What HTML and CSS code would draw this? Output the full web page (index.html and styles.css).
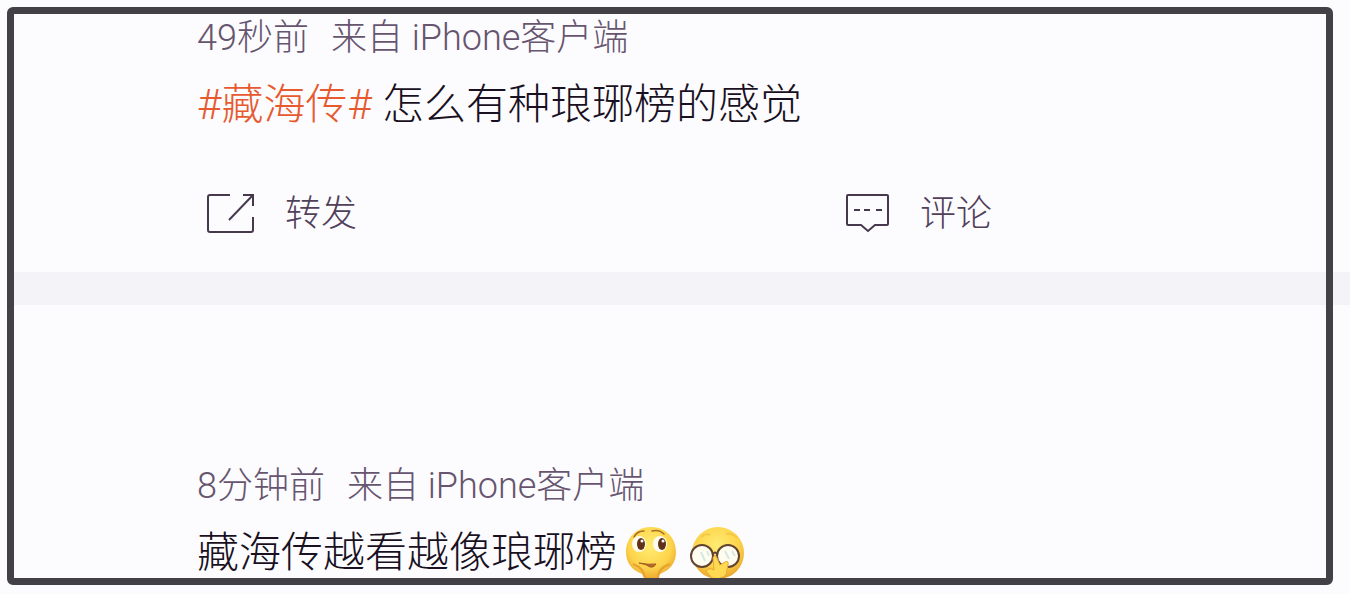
FILE: index.html
```html
<!DOCTYPE html>
<html lang="zh-CN">
<head>
<meta charset="utf-8">
<meta name="viewport" content="width=device-width, initial-scale=1">
<title>藏海传</title>
<link rel="stylesheet" href="styles.css">
</head>
<body>
<main class="feed">
  <article class="post">
    <p class="meta"><time>49秒前</time><span>来自 iPhone客户端</span></p>
    <p class="text"><a class="topic" href="#topic">#藏海传#</a> 怎么有种琅琊榜的感觉</p>
    <div class="actions">
      <button class="action" type="button">
        <svg class="icon" width="50" height="42" viewBox="0 0 50 42" aria-hidden="true"><path d="M24 2H4Q2 2 2 4V37Q2 39 4 39H45Q47 39 47 37V24M37 2H47V13M47 2L23 27"/></svg>
        <span>转发</span>
      </button>
      <button class="action" type="button">
        <svg class="icon" width="46" height="42" viewBox="0 0 46 42" aria-hidden="true"><path d="M3 2H42Q43 2 43 3V31Q43 32 42 32H30L23 38L16 32H3Q2 32 2 31V3Q2 2 3 2Z"/><path d="M9 17H15M19 17H25M31 17H37"/></svg>
        <span>评论</span>
      </button>
    </div>
  </article>
  <article class="post post-next">
    <p class="meta"><time>8分钟前</time><span>来自 iPhone客户端</span></p>
    <p class="text text-emojis"><span>藏海传越看越像琅琊榜</span><span class="emojis">
      <svg width="52" height="54" viewBox="0 0 52 54" role="img" aria-label="思考">
        <defs><radialGradient id="face" cx=".48" cy=".35" r=".65"><stop offset="0" stop-color="#ffec72"/><stop offset=".65" stop-color="#fdd44b"/><stop offset="1" stop-color="#eba52d"/></radialGradient></defs>
        <path d="M26 1C41 1 51 12 51 26C51 37 45 44 35 48Q33 54 26 54Q19 54 17 48C7 44 1 37 1 26C1 12 11 1 26 1Z" fill="url(#face)"/>
        <path d="M8 38Q19 42 20 52M45 38Q33 42 33 52" fill="none" stroke="#e8a22e" stroke-width="2"/>
        <path d="M9 11Q12 5 19 5M27 5Q34 3 39 8" fill="none" stroke="#a96b27" stroke-width="1.5" stroke-linecap="round"/>
        <ellipse cx="14" cy="18" rx="7" ry="8" fill="#fffbed"/><ellipse cx="35" cy="18" rx="7" ry="8" fill="#fffbed"/>
        <ellipse cx="16" cy="18" rx="4" ry="6" fill="#61301b"/><ellipse cx="37" cy="18" rx="4" ry="6" fill="#61301b"/>
        <circle cx="17" cy="15" r="1.5" fill="#fff"/><circle cx="38" cy="15" r="1.5" fill="#fff"/>
        <path d="M14 37Q24 39 31 38Q29 42 25 41Q21 38 14 37Z" fill="#b96a2b" stroke="#a35a26"/>
      </svg>
      <svg width="56" height="54" viewBox="0 0 56 54" role="img" aria-label="推眼镜">
        <circle cx="29" cy="27" r="26" fill="url(#face)"/>
        <path d="M12 11Q17 7 21 9M37 8Q44 7 48 12" fill="none" stroke="#f3c848" stroke-width="2"/>
        <circle cx="13" cy="30" r="11" fill="#fffdf0" stroke="#604331" stroke-width="2"/>
        <circle cx="39" cy="30" r="11" fill="#fffdf0" stroke="#604331" stroke-width="2"/>
        <path d="M24 28Q26 25 28 28" fill="none" stroke="#604331" stroke-width="2"/>
        <path d="M12 26L16 35M18 25L20 30M36 25L40 33M43 25L46 30" fill="none" stroke="#d5e8e3" stroke-width="2"/>
        <path d="M24 32Q26 27 28 32L31 39L36 36Q40 34 39 39L37 49Q31 54 23 52L17 45Q20 41 25 44Z" fill="#ffd951" stroke="#e9a634"/>
      </svg>
    </span></p>
  </article>
  <div class="frame" aria-hidden="true"></div>
</main>
</body>
</html>
```
FILE: styles.css
```css
* {
  box-sizing: border-box;
}

body {
  margin: 0;
  background: #fcfcff;
  color: #191022;
  font-family: Roboto, "Noto Sans CJK SC", sans-serif;
  font-weight: 300;
}

.feed {
  position: relative;
  min-height: 100vh;
  padding-left: 14px;
  overflow: hidden;
}

.post {
  padding: 12px 16px 32px 183px;
}

.post-next {
  border-top: 33px solid #f4f4f8;
  padding-top: 155px;
  padding-bottom: 8px;
}

.meta,
.text {
  margin: 0;
}

.meta {
  display: flex;
  gap: 22px;
  color: #67556f;
  font-size: 36px;
  line-height: 52px;
}

.text {
  margin-top: 9px;
  font-size: 42px;
  line-height: 64px;
}

.text-emojis {
  display: flex;
  align-items: center;
}

.topic {
  color: #e7592e;
  text-decoration: none;
}

.actions {
  display: grid;
  grid-template-columns: 639px 1fr;
  margin-top: 51px;
  padding-left: 9px;
}

.action {
  display: flex;
  align-items: center;
  justify-self: start;
  gap: 29px;
  padding: 0;
  border: 0;
  background: none;
  color: #51405a;
  font: inherit;
  font-size: 36px;
  line-height: 52px;
  cursor: pointer;
}

.icon {
  fill: none;
  stroke: #46394e;
  stroke-width: 2;
}

.emojis {
  display: inline-flex;
  gap: 12px;
  margin-left: 8px;
}

.frame {
  position: absolute;
  inset: 7px 17px 9px 7px;
  border: 7px solid #434147;
  border-radius: 6px;
  pointer-events: none;
}
```
